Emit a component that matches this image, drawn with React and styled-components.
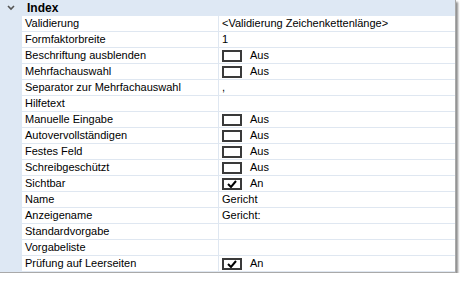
import React from 'react';
import styled, { createGlobalStyle } from 'styled-components';

const Global = createGlobalStyle`
  body {
    margin: 0;
    background: #ffffff;
    font-family: "Liberation Sans", Arial, sans-serif;
  }
`;

const Panel = styled.div`
  width: 455px;
  background: #ffffff;
  border-right: 1px solid #a9a9a9;
  border-bottom: 1px solid #a9a9a9;
  box-shadow: 2px 2px 2px rgba(0, 0, 0, 0.45);
  display: grid;
  grid-template-columns: 22px 196px 1fr;
  font-size: 11px;
  color: #000;
`;

const Header = styled.div`
  grid-column: 1 / 4;
  height: 16px;
  background: #dee8f4;
  display: flex;
  align-items: center;
`;

const Chevron = styled.svg`
  width: 22px;
  height: 16px;
`;

const Title = styled.span`
  font-weight: bold;
  font-size: 12px;
  padding-left: 5px;
`;

const Gutter = styled.div`
  background: #dee8f4;
  height: 16px;
`;

const Cell = styled.div`
  height: 15px;
  line-height: 15px;
  border-bottom: 1px solid #dfe7f1;
  border-left: ${p => (p.$value ? '1px solid #dfe7f1' : 'none')};
  padding-left: 3px;
  white-space: nowrap;
  overflow: hidden;
  display: flex;
  align-items: center;
`;

const Box = styled.span`
  width: 16px;
  height: 8px;
  border: 2px solid #3a3a3a;
  background: #fff;
  display: inline-flex;
  align-items: center;
  justify-content: center;
  margin-right: 8px;
  box-sizing: content-box;
`;

const Check = () => (
  <svg width="10" height="8" viewBox="0 0 10 8">
    <path d="M1 4 L4 7 L9 1" fill="none" stroke="#000" strokeWidth="2" />
  </svg>
);

const rows = [
  ['Validierung', '<Validierung Zeichenkettenlänge>'],
  ['Formfaktorbreite', '1'],
  ['Beschriftung ausblenden', false],
  ['Mehrfachauswahl', false],
  ['Separator zur Mehrfachauswahl', ','],
  ['Hilfetext', ''],
  ['Manuelle Eingabe', false],
  ['Autovervollständigen', false],
  ['Festes Feld', false],
  ['Schreibgeschützt', false],
  ['Sichtbar', true],
  ['Name', 'Gericht'],
  ['Anzeigename', 'Gericht:'],
  ['Standardvorgabe', ''],
  ['Vorgabeliste', ''],
  ['Prüfung auf Leerseiten', true],
];

const Value = ({ v }) => {
  if (typeof v === 'boolean') {
    return (
      <>
        <Box>{v && <Check />}</Box>
        {v ? 'An' : 'Aus'}
      </>
    );
  }
  return v;
};

export default function App() {
  return (
    <>
      <Global />
      <Panel>
        <Header>
          <Chevron viewBox="0 0 22 16">
            <path d="M8 6 L11 9 L14 6" fill="none" stroke="#555" strokeWidth="1.6" />
          </Chevron>
          <Title>Index</Title>
        </Header>
        {rows.map(([name, v]) => (
          <React.Fragment key={name}>
            <Gutter />
            <Cell>{name}</Cell>
            <Cell $value>
              <Value v={v} />
            </Cell>
          </React.Fragment>
        ))}
      </Panel>
    </>
  );
}
